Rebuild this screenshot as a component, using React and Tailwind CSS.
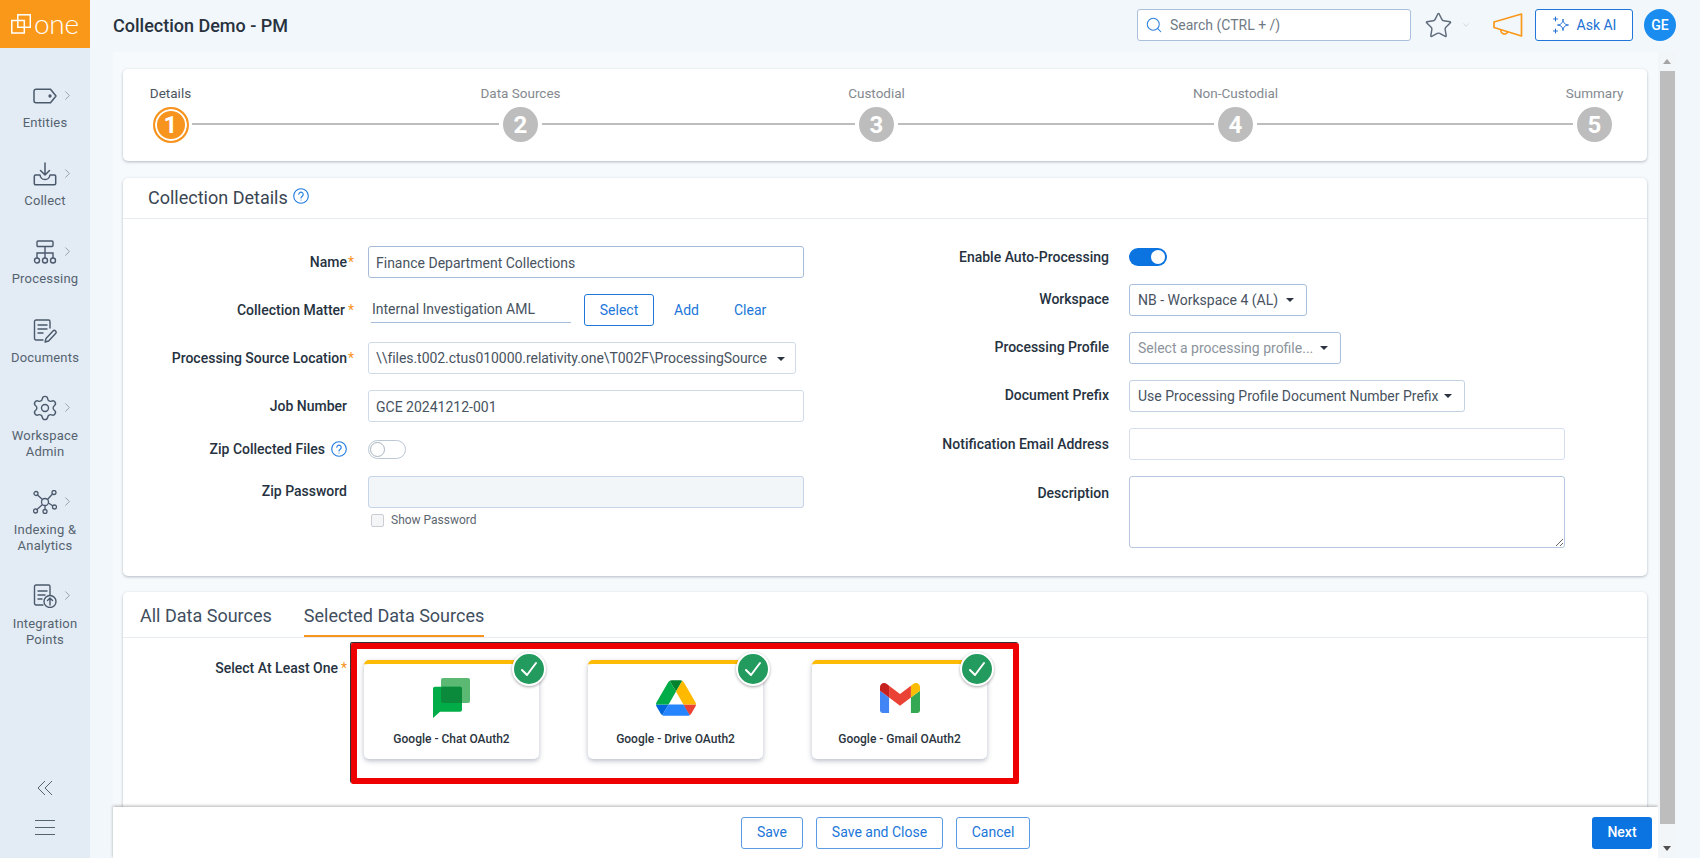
import React from "react";
import { Search, Star, ChevronDown, ChevronRight, Settings } from "lucide-react";

const ink = "#4a596b";

function TagIcon() {
  return (
    <svg width="24" height="16" viewBox="0 0 24 16" fill="none" stroke={ink} strokeWidth="1.5" strokeLinejoin="round">
      <path d="M3 1.200h14.500L23 8l-5.500 6.800H3A2 2 0 0 1 1 12.800V3.200A2 2 0 0 1 3 1.200Z" />
      <circle cx="17" cy="8" r="0.900" fill={ink} />
    </svg>
  );
}
function CollectIcon() {
  return (
    <svg width="24" height="24" viewBox="0 0 24 24" fill="none" stroke={ink} strokeWidth="1.5" strokeLinecap="round" strokeLinejoin="round">
      <path d="M12 1v12M7.500 8.500 12 13l4.500-4.500" />
      <path d="M7 13H2.500a1.200 1.200 0 0 0-1.200 1.200v7.400A1.200 1.200 0 0 0 2.500 22.800h19a1.200 1.200 0 0 0 1.200-1.200v-7.400a1.200 1.200 0 0 0-1.200-1.200H17c-.5 3-2.300 4.500-5 4.500S7.500 16 7 13Z" />
    </svg>
  );
}
function ProcessIcon() {
  return (
    <svg width="24" height="24" viewBox="0 0 24 24" fill="none" stroke={ink} strokeWidth="1.4">
      <rect x="4" y="1" width="16" height="5.500" rx="1" />
      <path d="M12 6.500V18M4 18v-5h16v5" />
      <circle cx="4" cy="20.500" r="2.500" />
      <circle cx="12" cy="20.500" r="2.500" />
      <circle cx="20" cy="20.500" r="2.500" />
    </svg>
  );
}
function DocEditIcon() {
  return (
    <svg width="24" height="24" viewBox="0 0 24 24" fill="none" stroke={ink} strokeWidth="1.4" strokeLinecap="round" strokeLinejoin="round">
      <path d="M10 21H3a1.500 1.500 0 0 1-1.500-1.500V2.500A1.500 1.500 0 0 1 3 1h12.500A1.500 1.500 0 0 1 17 2.500V9" />
      <path d="M5 6h9M5 10h9M5 14h5" />
      <path d="m13 19.500 7-7.500a1.800 1.800 0 0 1 2.600 2.500l-7 7.500-3.500 1Z" />
    </svg>
  );
}
function NetworkIcon() {
  return (
    <svg width="24" height="24" viewBox="0 0 24 24" fill="none" stroke={ink} strokeWidth="1.300">
      <circle cx="12" cy="12" r="3.500" />
      <circle cx="3" cy="3.500" r="2" />
      <circle cx="21" cy="2.500" r="2" />
      <circle cx="2.500" cy="21" r="2" />
      <circle cx="12" cy="21.500" r="2" />
      <circle cx="21.500" cy="17" r="2" />
      <path d="m4.500 5 5 4.500M19.500 4l-5 5.500M4 19.500l5.500-5M12 15.500v4M15.500 13l4.500 3" />
    </svg>
  );
}
function DocUpIcon() {
  return (
    <svg width="24" height="24" viewBox="0 0 24 24" fill="none" stroke={ink} strokeWidth="1.4" strokeLinecap="round" strokeLinejoin="round">
      <path d="M10 21H3a1.500 1.500 0 0 1-1.500-1.500V2.500A1.500 1.500 0 0 1 3 1h12.500A1.500 1.500 0 0 1 17 2.500V11" />
      <path d="M5 7h9M5 11h7M5 15h4" />
      <circle cx="17" cy="17.500" r="6" />
      <path d="M17 21v-7M14.500 16.500 17 14l2.500 2.500" />
    </svg>
  );
}

function NavItem({ icon, lines, chevron = true, mb = "mb-[31px]", gap = "mt-[7px]" }) {
  return (
    <div className={`flex flex-col items-center ${mb}`}>
      <div className="relative flex h-6 w-6 items-center justify-center">
        {icon}
        {chevron && (
          <ChevronRight size={15} strokeWidth={1.2} className="absolute -right-[18px] top-[4px] text-[#7c8896]" />
        )}
      </div>
      <div className={`${gap} text-center text-[13px] leading-[16px] tracking-[0.2px] text-[#55636f]`}>
        {lines.map((l) => (
          <div key={l}>{l}</div>
        ))}
      </div>
    </div>
  );
}

function Sidebar() {
  return (
    <aside className="flex w-[90px] shrink-0 flex-col bg-[#e3ebf5]">
      <div className="flex h-[48px] items-center gap-[3px] bg-[#fa9819] pl-[11px] text-white">
        <svg width="20" height="20" viewBox="0 0 20 20" fill="none" stroke="#fff" strokeWidth="1.5">
          <rect x="0.800" y="6.500" width="12.500" height="12.500" />
          <rect x="6.800" y="0.800" width="12.500" height="12.500" />
        </svg>
        <span className="-mt-[3px] font-[family-name:Lato,sans-serif] text-[28px] font-light leading-none tracking-[-0.3px]">one</span>
      </div>
      <div className="flex flex-1 flex-col pt-[36px]">
        <NavItem icon={<TagIcon />} lines={["Entities"]} />
        <NavItem icon={<CollectIcon />} lines={["Collect"]} />
        <NavItem icon={<ProcessIcon />} lines={["Processing"]} mb="mb-[32px]" />
        <NavItem icon={<DocEditIcon />} lines={["Documents"]} chevron={false} mb="mb-[30px]" />
        <NavItem icon={<Settings size={28} strokeWidth={1.2} color={ink} className="shrink-0" />} lines={["Workspace", "Admin"]} gap="mt-[8px]" mb="mb-[30px]" />
        <NavItem icon={<NetworkIcon />} lines={["Indexing &", "Analytics"]} gap="mt-[8px]" mb="mb-[30px]" />
        <NavItem icon={<DocUpIcon />} lines={["Integration", "Points"]} gap="mt-[8px]" mb="mb-0" />
        <div className="mt-auto flex flex-col items-center pb-[23px]">
          <svg width="18" height="16" viewBox="0 0 18 16" fill="none" stroke="#55636f" strokeWidth="1">
            <path d="M9 1 2 8l7 7M16 1 9 8l7 7" />
          </svg>
          <div className="mt-[24px] flex w-5 flex-col gap-[6px]">
            <div className="h-px bg-[#55636f]" />
            <div className="h-px bg-[#55636f]" />
            <div className="h-px bg-[#55636f]" />
          </div>
        </div>
      </div>
    </aside>
  );
}

function Header() {
  return (
    <header className="flex h-[52px] shrink-0 items-center pb-[2px] pl-[23px] pr-[24px]">
      <h1 className="text-[18px] font-medium text-[#27323e]">Collection Demo - PM</h1>
      <div className="ml-auto flex items-center">
        <div className="flex h-8 w-[274px] items-center rounded-[3px] border border-[#a9bfdc] bg-white pl-[7px]">
          <Search size={18} strokeWidth={1.4} className="text-[#2a80dc]" />
          <span className="ml-[7px] text-[14px] text-[#6f7a85]">Search (CTRL + /)</span>
        </div>
        <Star size={29} strokeWidth={1.2} className="ml-[13px] text-[#5f6b7a]" />
        <ChevronDown size={10} strokeWidth={1.4} className="ml-[8px] text-[#b9c0c8]" />
        <svg className="ml-[22px]" width="30" height="24" viewBox="0 0 30 24" fill="none" stroke="#fa9819" strokeWidth="1.700" strokeLinejoin="round">
          <path d="M1 9 28.500 1v22L1 14.500Z" />
          <path d="M8 16.500a3.500 3.500 0 0 0 6.800 1.900" />
        </svg>
        <button className="ml-[12px] flex h-8 w-[98px] items-center justify-center gap-[7px] rounded-[3px] border border-[#2176d9] bg-white text-[14px] text-[#2171d3]">
          <svg width="18" height="18" viewBox="0 0 18 18" fill="none" stroke="#2171d3" strokeWidth="1" strokeLinejoin="round" strokeLinecap="round">
            <path d="M11 3.500c.4 3.700 1.800 5.100 5.500 5.500-3.700.4-5.100 1.800-5.500 5.500-.4-3.700-1.800-5.100-5.500-5.500 3.700-.4 5.100-1.800 5.500-5.500Z" />
            <path d="M3.500 1v4M1.500 3h4M3.500 13v4M1.500 15h4" />
          </svg>
          Ask AI
        </button>
        <div className="ml-[11px] flex h-8 w-8 items-center justify-center rounded-full bg-[#1a8cf0] text-[14px] font-medium text-white">GE</div>
      </div>
    </header>
  );
}

function StepCircle({ n, active }) {
  return (
    <div
      className={
        active
          ? "flex h-[36px] w-[36px] shrink-0 items-center justify-center rounded-full border-2 border-[#f7941d] bg-[#f7941d] text-[24px] font-bold leading-none text-white shadow-[inset_0_0_0_2px_#fff]"
          : "flex h-[35px] w-[35px] shrink-0 items-center justify-center rounded-full bg-[#bdbdbd] text-[24px] font-bold leading-none text-white"
      }
    >
      {n}
    </div>
  );
}

function Step({ n, label, active }) {
  return (
    <div className="flex w-[35px] flex-col items-center">
      <div className={`mb-[6px] whitespace-nowrap text-[13.5px] leading-4 ${active ? "text-[#4c5560]" : "text-[#84898f]"}`}>{label}</div>
      <StepCircle n={n} active={active} />
    </div>
  );
}

function Stepper() {
  const Line = ({ w }) => <div className={`mx-1 mb-[18px] h-[2px] self-end bg-[#bdbdbd] ${w}`} />;
  return (
    <section className="h-[92px] shrink-0 rounded-[5px] bg-white pl-[30px] pt-[16px] shadow-[0_1px_3px_rgba(70,90,120,0.4)]">
      <div className="flex">
        <Step n="1" label="Details" active />
        <Line w="w-[307px]" />
        <Step n="2" label="Data Sources" />
        <Line w="w-[313px]" />
        <Step n="3" label="Custodial" />
        <Line w="w-[316px]" />
        <Step n="4" label="Non-Custodial" />
        <Line w="w-[316px]" />
        <Step n="5" label="Summary" />
      </div>
    </section>
  );
}

function HelpIcon({ size = 16 }) {
  return (
    <svg width={size} height={size} viewBox="0 0 16 16" fill="none" stroke="#1f7ae0" strokeWidth="1.100">
      <circle cx="8" cy="8" r="7.300" />
      <path d="M5.800 6.300a2.200 2.200 0 1 1 3.400 1.900c-.8.500-1.200.9-1.200 1.800" strokeLinecap="round" />
      <circle cx="8" cy="12" r="0.500" fill="#1f7ae0" stroke="none" />
    </svg>
  );
}

function Caret() {
  return (
    <svg className="shrink-0" width="8" height="4" viewBox="0 0 8 4"><path d="M0 0h8L4 4Z" fill="#2b3440" /></svg>
  );
}

function Label({ children, req, star = true, w, h = "" }) {
  return (
    <div className={`flex shrink-0 items-center justify-end text-[14px] font-medium text-[#26323f] ${w} ${h}`}>
      {children}
      {star && <span className="w-2 pl-[1px] text-[14px] font-normal text-[#f7941d]">{req ? "*" : ""}</span>}
    </div>
  );
}

function LeftForm() {
  const w = "w-[231px]";
  const box = "h-8 rounded-[3px] border bg-white pl-[7px] pr-2 pt-px text-[14px] text-[#48535f] outline-none";
  return (
    <div className="w-[690px] shrink-0">
      <div className="mb-4 flex gap-[13px]">
        <Label w={w} req>Name</Label>
        <input readOnly value="Finance Department Collections" className={`w-[436px] border-[#a6bcd9] ${box}`} />
      </div>
      <div className="mb-4 flex gap-[13px]">
        <Label w={w} req><span className="mr-[2px]">Collection Matter</span></Label>
        <div className="flex w-[436px] items-start">
          <div className="ml-[3px] h-[29px] w-[200px] border-b border-[#a6bcd9] pl-px pt-[5px] text-[14px] leading-[20px] text-[#48535f]">Internal Investigation AML</div>
          <button className="ml-[13px] h-8 w-[70px] rounded-[3px] border border-[#2176d9] bg-white text-[14px] text-[#2176d9]">Select</button>
          <span className="ml-5 mt-[6px] text-[14px] text-[#2176d9]">Add</span>
          <span className="ml-[35px] mt-[6px] text-[14px] text-[#2176d9]">Clear</span>
        </div>
      </div>
      <div className="mb-4 flex gap-[13px]">
        <Label w={w} req>Processing Source Location</Label>
        <div className={`flex w-[428px] items-center justify-between whitespace-nowrap border-[#cfdbe9] ${box}`}>
          <span className="tracking-[-0.05px]">{"\\\\files.t002.ctus010000.relativity.one\\T002F\\ProcessingSource"}</span>
          <span className="mr-[2px]"><Caret /></span>
        </div>
      </div>
      <div className="mb-4 flex gap-[13px]">
        <Label w={w}>Job Number</Label>
        <input readOnly value="GCE 20241212-001" className={`w-[436px] border-[#cfdbe9] ${box}`} />
      </div>
      <div className="mb-4 flex h-[22px] items-center gap-[13px]">
        <Label w={w}>
          Zip Collected Files
          <span className="ml-[6px]"><HelpIcon /></span>
        </Label>
        <div className="flex h-[19px] w-[38px] items-center rounded-full border border-[#bcc7d4] bg-white pl-px">
          <div className="h-[15px] w-[15px] rounded-full border border-[#a9b3bf] bg-white" />
        </div>
      </div>
      <div className="flex items-start gap-[13px]">
        <Label w={w} h="h-[30px]">Zip Password</Label>
        <div>
          <div className="h-8 w-[436px] rounded-[3px] border border-[#c5d4e6] bg-[#f3f6f9]" />
          <div className="ml-[3px] mt-[3px] flex items-center gap-[7px] text-[12px] text-[#5d666f]">
            <div className="h-[13px] w-[13px] rounded-[2px] border border-[#c9ced4] bg-[#f4f5f6]" />
            Show Password
          </div>
        </div>
      </div>
    </div>
  );
}

function RightForm() {
  const w = "w-[295px]";
  const box = "flex h-8 items-center justify-between rounded-[3px] border bg-white pl-2 pr-3 text-[14px]";
  return (
    <div className="flex-1">
      <div className="mb-4 flex h-[22px] gap-5">
        <Label w={w} star={false}>Enable Auto-Processing</Label>
        <div className="flex h-[18px] w-[38px] items-center justify-end self-center rounded-full bg-[#0b74e0] pr-[2px]">
          <div className="h-[14px] w-[14px] rounded-full bg-white" />
        </div>
      </div>
      <div className="mb-4 flex gap-5">
        <Label w={w} star={false}><span className="-mt-[2px]">Workspace</span></Label>
        <div className={`w-[178px] border-[#a9bfdc] text-[#48535f] ${box}`}>NB - Workspace 4 (AL)<Caret /></div>
      </div>
      <div className="mb-4 flex gap-5">
        <Label w={w} star={false}><span className="-mt-[2px]">Processing Profile</span></Label>
        <div className={`w-[212px] border-[#a9bfdc] text-[#8c949c] ${box}`}>Select a processing profile...<Caret /></div>
      </div>
      <div className="mb-4 flex gap-5">
        <Label w={w} star={false}><span className="-mt-[2px]">Document Prefix</span></Label>
        <div className={`w-[336px] border-[#c3d1e3] text-[#48535f] ${box}`}>Use Processing Profile Document Number Prefix<Caret /></div>
      </div>
      <div className="mb-4 flex gap-5">
        <Label w={w} star={false}>Notification Email Address</Label>
        <div className="h-8 w-[436px] rounded-[3px] border border-[#d5dff0] bg-white" />
      </div>
      <div className="flex gap-5">
        <div className="flex w-[295px] shrink-0 justify-end pt-[7px] text-[14px] font-medium text-[#26323f]">Description</div>
        <textarea readOnly className="h-[72px] w-[436px] rounded-[3px] border border-[#b7c8de] bg-white" />
      </div>
    </div>
  );
}

function Details() {
  return (
    <section className="mt-[17px] h-[398px] shrink-0 rounded-[5px] bg-white shadow-[0_1px_3px_rgba(70,90,120,0.4)]">
      <div className="flex h-[41px] items-center gap-[5px] border-b border-[#e6ecf2] pb-[2px] pl-[25px]">
        <span className="text-[18px] text-[#3a4653]">Collection Details</span>
        <span className="-mt-[3px]"><HelpIcon /></span>
      </div>
      <div className="flex pl-px pt-[27px]">
        <LeftForm />
        <RightForm />
      </div>
    </section>
  );
}

function ChatLogo() {
  return (
    <svg width="37" height="40" viewBox="0 0 37 40">
      <rect x="8" y="0" width="29" height="25" rx="2" fill="#5bb974" />
      <path d="M2 8.700h25a2 2 0 0 1 2 2v21a2 2 0 0 1-2 2H7L0 40V10.700a2 2 0 0 1 2-2Z" fill="#00ac47" />
      <path d="M8 10.700a2 2 0 0 1 2-2h17a2 2 0 0 1 2 2V25H10a2 2 0 0 1-2-2Z" fill="#0c8a3c" />
    </svg>
  );
}
function DriveLogo() {
  return (
    <svg width="40" height="36" viewBox="0 0 87.300 78">
      <path d="m6.600 66.850 3.850 6.650c.8 1.400 1.950 2.500 3.300 3.300l13.750-23.800h-27.500c0 1.550.4 3.100 1.200 4.500z" fill="#0066da" />
      <path d="m43.650 25-13.750-23.800c-1.350.8-2.500 1.900-3.300 3.300l-25.400 44a9.060 9.060 0 0 0 -1.200 4.500h27.500z" fill="#00ac47" />
      <path d="m73.550 76.800c1.350-.8 2.500-1.900 3.300-3.300l1.600-2.750 7.650-13.250c.8-1.400 1.200-2.950 1.200-4.500h-27.502l5.852 11.500z" fill="#ea4335" />
      <path d="m43.650 25 13.750-23.800c-1.350-.8-2.900-1.200-4.500-1.200h-18.500c-1.600 0-3.150.45-4.500 1.200z" fill="#00832d" />
      <path d="m59.800 53h-32.300l-13.750 23.800c1.350.8 2.900 1.200 4.500 1.200h50.800c1.600 0 3.150-.45 4.500-1.200z" fill="#2684fc" />
      <path d="m73.400 26.500-12.700-22c-.8-1.400-1.950-2.500-3.300-3.300l-13.750 23.800 16.150 28h27.450c0-1.550-.4-3.100-1.200-4.500z" fill="#ffba00" />
    </svg>
  );
}
function GmailLogo() {
  return (
    <svg width="40" height="30" viewBox="52 42 88 66">
      <path fill="#4285f4" d="M58 108h14V74L52 59v43c0 3.320 2.690 6 6 6" />
      <path fill="#34a853" d="M120 108h14c3.320 0 6-2.690 6-6V59l-20 15" />
      <path fill="#fbbc04" d="M120 48v26l20-15v-8c0-7.420-8.470-11.650-14.400-7.200" />
      <path fill="#ea4335" d="M72 74V48l24 18 24-18v26L96 92" />
      <path fill="#c5221f" d="M52 51v8l20 15V48l-5.600-4.200c-5.940-4.450-14.400-.22-14.400 7.200" />
    </svg>
  );
}

function SourceCard({ logo, name }) {
  return (
    <div className="relative h-[99px] w-[175px] shrink-0 rounded-[5px] border-t-4 border-[#fcbc05] bg-white shadow-[0_2px_5px_rgba(60,70,100,0.35)]">
      <div className="flex h-[55px] items-center justify-center pt-[12px]">{logo}</div>
      <div className="mt-[12px] text-center text-[12px] font-medium leading-4 text-[#2b3440]">{name}</div>
      <div className="absolute -right-[7px] -top-[12px] flex h-[34px] w-[34px] items-center justify-center rounded-full border-2 border-white bg-[#249b5e] shadow-[0_1px_3px_rgba(0,0,0,0.35)]">
        <svg width="18" height="18" viewBox="0 0 18 18" fill="none" stroke="#fff" strokeWidth="2" strokeLinecap="round" strokeLinejoin="round">
          <path d="m2 10 5 5L16 3" />
        </svg>
      </div>
    </div>
  );
}

function DataSources() {
  return (
    <section className="mt-[16px] h-[320px] shrink-0 rounded-[5px] bg-white shadow-[0_1px_3px_rgba(70,90,120,0.4)]">
      <div className="flex h-[46px] gap-[32px] border-b border-[#e6ecf2] pl-[17px] text-[18px] text-[#3f4e5e]">
        <div className="pt-[10px]">All Data Sources</div>
        <div className="h-[45px] border-b-2 border-[#f7941d] pt-[10px]">Selected Data Sources</div>
      </div>
      <div className="flex pl-px pt-[5px]">
        <div className="flex w-[223px] shrink-0 items-start justify-end pt-[17px] text-[14px] font-medium leading-4 text-[#26323f]">
          Select At Least One<span className="ml-[3px] font-normal text-[#f7941d]">*</span>
        </div>
        <div className="ml-[4px] flex h-[141px] w-[668px] gap-[49px] rounded-[2px] border-[6px] border-[#ee0000] pl-[7px] pt-[11px] shadow-[-1px_-1px_0_#333]">
          <SourceCard logo={<ChatLogo />} name="Google - Chat OAuth2" />
          <SourceCard logo={<DriveLogo />} name="Google - Drive OAuth2" />
          <SourceCard logo={<GmailLogo />} name="Google - Gmail OAuth2" />
        </div>
      </div>
    </section>
  );
}

function Footer() {
  const btn = "h-8 rounded-[3px] border border-[#5b9be6] bg-white pb-px text-[14px] text-[#2176d9]";
  return (
    <footer className="grid h-[51px] shrink-0 grid-cols-[1fr_auto_1fr] bg-white pt-[10px] shadow-[0_-1px_3px_rgba(0,0,0,0.3)]">
      <div />
      <div className="flex gap-[13px]">
        <button className={`${btn} w-[62px]`}>Save</button>
        <button className={`${btn} w-[127px]`}>Save and Close</button>
        <button className={`${btn} w-[74px]`}>Cancel</button>
      </div>
      <button className="mr-[6px] h-8 w-[60px] justify-self-end rounded-[3px] bg-[#0b74e0] pb-px text-[14px] font-medium text-white">Next</button>
    </footer>
  );
}

function Scrollbar() {
  return (
    <div className="flex w-[18px] shrink-0 flex-col items-center bg-[#f3f6f9]">
      <div className="flex h-[19px] shrink-0 items-center justify-center">
        <svg width="8" height="5" viewBox="0 0 8 5"><path d="M4 0 8 5H0Z" fill="#a3a3a3" /></svg>
      </div>
      <div className="h-[753px] w-[15px] shrink-0 bg-[#bdbdbd]" />
      <div className="flex h-[34px] shrink-0 justify-center pt-[22px]">
        <svg width="8" height="5" viewBox="0 0 8 5"><path d="M0 0h8L4 5Z" fill="#505050" /></svg>
      </div>
    </div>
  );
}

export default function App() {
  return (
    <div className="flex h-[858px] w-[1700px] overflow-hidden bg-[#f2f7fb] font-[family-name:Roboto,sans-serif]">
      <Sidebar />
      <div className="flex min-w-0 flex-1 flex-col">
        <Header />
        <div className="flex min-h-0 flex-1 pl-[23px] pr-[24px]">
          <main className="flex min-w-0 flex-1 flex-col">
            <div className="flex min-h-0 flex-1 flex-col overflow-hidden bg-[#f7fafc] pl-[10px] pr-[11px] pt-[17px]">
              <Stepper />
              <Details />
              <DataSources />
            </div>
            <Footer />
          </main>
          <Scrollbar />
        </div>
      </div>
    </div>
  );
}
